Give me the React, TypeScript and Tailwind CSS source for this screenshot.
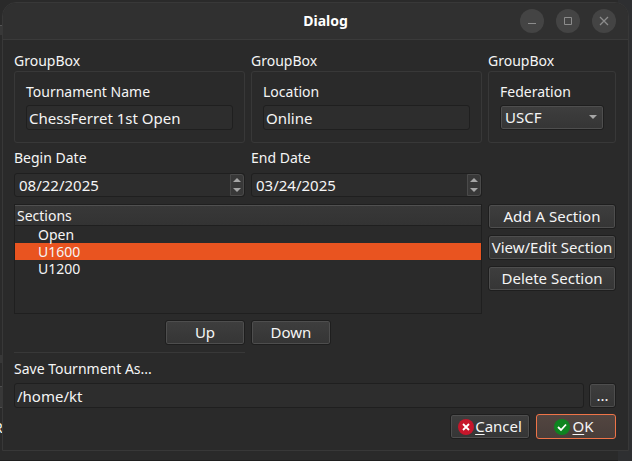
import React, { useState } from "react";

const btn =
  "flex items-center justify-center rounded-[3px] border border-[#1e1e1e] bg-gradient-to-b from-[#3e3e3e] to-[#353535] text-[15px] text-[#f5f5f5] shadow-[inset_0_0_0_1px_#4e4e4e]";
const field =
  "w-full min-w-0 rounded-[3px] border border-[#1f1f1f] bg-[#2d2d2d] text-[15px] text-[#f5f5f5] outline-none";

function Group({ id, label, children }: { id: string; label: string; children: React.ReactNode }) {
  return (
    <fieldset className="min-w-0">
      <legend className="h-[18px] leading-4">GroupBox</legend>
      <div className="h-[72px] rounded-[3px] border border-[#383838] px-[11px] pt-[11px]">
        <label htmlFor={id} className="mb-1 block h-[18px] leading-[18px]">
          {label}
        </label>
        {children}
      </div>
    </fieldset>
  );
}

function DateField({ id, label, value }: { id: string; label: string; value: string }) {
  return (
    <div className="min-w-0">
      <label htmlFor={id} className="mb-[6px] block h-[18px] leading-[18px]">
        {label}
      </label>
      <div className="flex h-6 overflow-hidden rounded-[3px] border border-[#1f1f1f] bg-[#2d2d2d]">
        <input id={id} defaultValue={value} className="min-w-0 flex-1 bg-transparent px-1 text-[15px] outline-none" />
        <div className="flex w-[14px] flex-col rounded-r-[3px] border border-[#4a4a4a] bg-[#383838]">
          <button type="button" aria-label={`${label} up`} className="flex flex-1 items-center justify-center">
            <svg width="8" height="4" viewBox="0 0 8 4" fill="#a6a6a6">
              <path d="M0 4L4 0L8 4Z" />
            </svg>
          </button>
          <button type="button" aria-label={`${label} down`} className="flex flex-1 items-center justify-center">
            <svg width="8" height="4" viewBox="0 0 8 4" fill="#a6a6a6">
              <path d="M0 0L4 4L8 0Z" />
            </svg>
          </button>
        </div>
      </div>
    </div>
  );
}

function WindowButton({ label, children }: { label: string; children: React.ReactNode }) {
  return (
    <button type="button" aria-label={label} className="flex h-6 w-6 items-center justify-center rounded-full bg-[#444444]">
      <svg width="24" height="24" viewBox="0 0 24 24" fill="none" stroke="#8c8c8c">
        {children}
      </svg>
    </button>
  );
}

export default function App() {
  const [selected, setSelected] = useState("U1600");
  return (
    <div className="relative min-h-screen overflow-hidden bg-[#2a2a2a] pt-[2px] pr-[3px] pb-[9px] pl-[2px] font-['Noto_Sans',sans-serif] text-[14px] text-[#f5f5f5]">
      <div className="absolute top-0 right-0 h-full w-[14px] bg-[#2e2f31]" />
      <div className="absolute top-[25px] left-0 h-[10px] w-1 border-t border-[#555555] bg-[#383838]" />
      <div className="absolute top-[355px] left-0 h-2 w-1 bg-[#383838]" />
      <div className="absolute top-[386px] left-0 h-[22px] w-1 border-y border-[#4e4e4e] bg-[#383838]" />
      <div className="absolute top-[418px] left-[-6px] leading-5">R</div>
      <div className="absolute right-[14px] bottom-0 left-0 h-px bg-[#1f1f1f]" />

      <main className="relative rounded-t-[14px] border border-[#383838] bg-[#2a2a2a]">
        <header className="grid h-[37px] grid-cols-[1fr_auto_1fr] items-center rounded-t-[13px] border-b border-[#3a3a3a] bg-[#303030] px-3">
          <h1 className="col-start-2 pl-5 leading-4 font-bold text-white">Dialog</h1>
          <div className="flex justify-end gap-3">
            <WindowButton label="Minimize">
              <path d="M8 14.5H16" />
            </WindowButton>
            <WindowButton label="Maximize">
              <path d="M8.5 8.5H15.5V15.5H8.5Z" />
            </WindowButton>
            <WindowButton label="Close">
              <path d="M8 8L16 16M16 8L8 16" strokeWidth="1.3" />
            </WindowButton>
          </div>
        </header>

        <form className="pt-[13px] pr-3 pb-[11px] pl-[11px]" onSubmit={(e) => e.preventDefault()}>
          <div className="grid grid-cols-[1fr_1fr_128px] gap-x-[6px]">
            <Group id="name" label="Tournament Name">
              <input id="name" defaultValue="ChessFerret 1st Open" className={`${field} h-[25px] px-[2px]`} />
            </Group>
            <Group id="location" label="Location">
              <input id="location" defaultValue="Online" className={`${field} h-[25px] px-[2px]`} />
            </Group>
            <Group id="federation" label="Federation">
              <div className="relative">
                <select id="federation" className={`${btn} h-[25px] w-full appearance-none px-1 outline-none`}>
                  <option>USCF</option>
                </select>
                <svg className="pointer-events-none absolute top-[10px] right-[7px]" width="8" height="4" viewBox="0 0 8 4" fill="#a6a6a6">
                  <path d="M0 0L4 4L8 0Z" />
                </svg>
              </div>
            </Group>
          </div>

          <div className="mt-[6px] grid grid-cols-[1fr_1fr_128px] gap-x-[6px]">
            <DateField id="begin" label="Begin Date" value="08/22/2025" />
            <DateField id="end" label="End Date" value="03/24/2025" />
          </div>

          <div className="mt-[7px] flex gap-[6px]">
            <div className="h-[110px] min-w-0 flex-1 border border-[#1f1f1f]">
              <table className="w-full border-separate border-spacing-0">
                <thead>
                  <tr>
                    <th className="h-[21px] border-t border-b border-t-[#505050] border-b-[#1f1f1f] bg-gradient-to-b from-[#383838] to-[#333333] p-0 pl-[2px] text-left leading-[19px] font-normal">
                      Sections
                    </th>
                  </tr>
                </thead>
                <tbody>
                  {["Open", "U1600", "U1200"].map((s) => (
                    <tr key={s} onClick={() => setSelected(s)} className={s === selected ? "bg-[#e95420]" : ""}>
                      <td className="h-[17px] p-0 pl-[23px] leading-[17px]">{s}</td>
                    </tr>
                  ))}
                </tbody>
              </table>
            </div>
            <div className="flex w-[128px] flex-col gap-[6px]">
              {["Add A Section", "View/Edit Section", "Delete Section"].map((s) => (
                <button key={s} type="button" className={`${btn} h-[25px] whitespace-nowrap`}>
                  {s}
                </button>
              ))}
            </div>
          </div>

          <div className="mt-[6px] grid grid-cols-[1fr_1fr_128px] gap-x-[6px]">
            <button type="button" className={`${btn} h-[25px] w-20 justify-self-end`}>
              Up
            </button>
            <button type="button" className={`${btn} h-[25px] w-20`}>
              Down
            </button>
            <hr className="col-start-1 mt-[7px] border-t border-[#383838]" />
          </div>

          <label htmlFor="path" className="mt-[7px] mb-[5px] block h-[18px] leading-[18px]">
            Save Tournment As...
          </label>
          <div className="flex gap-[5px]">
            <input id="path" defaultValue="/home/kt" className={`${field} h-[25px] flex-1 px-[2px]`} />
            <button type="button" className={`${btn} h-[25px] w-[27px]`}>
              ...
            </button>
          </div>

          <div className="mt-[6px] flex justify-end gap-[6px]">
            <button type="button" className={`${btn} h-[25px] w-20 gap-px`}>
              <svg width="16" height="16" viewBox="0 0 16 16">
                <circle cx="8" cy="8" r="8" fill="#c7162b" />
                <path d="M5 5L11 11M11 5L5 11" stroke="white" strokeWidth="1.8" />
              </svg>
              <span>
                <span className="underline underline-offset-2">C</span>ancel
              </span>
            </button>
            <button
              type="submit"
              className="flex h-[25px] w-20 items-center justify-center gap-[2px] rounded-[3px] border border-[#ef7448] bg-gradient-to-b from-[#524540] to-[#493e3a] text-[15px]"
            >
              <svg width="16" height="16" viewBox="0 0 16 16">
                <circle cx="8" cy="8" r="8" fill="#0e8420" />
                <path d="M4 8L7 11L12 5.5" fill="none" stroke="white" strokeWidth="1.8" />
              </svg>
              <span className="pr-1">
                <span className="underline underline-offset-2">O</span>K
              </span>
            </button>
          </div>
        </form>
      </main>
    </div>
  );
}
